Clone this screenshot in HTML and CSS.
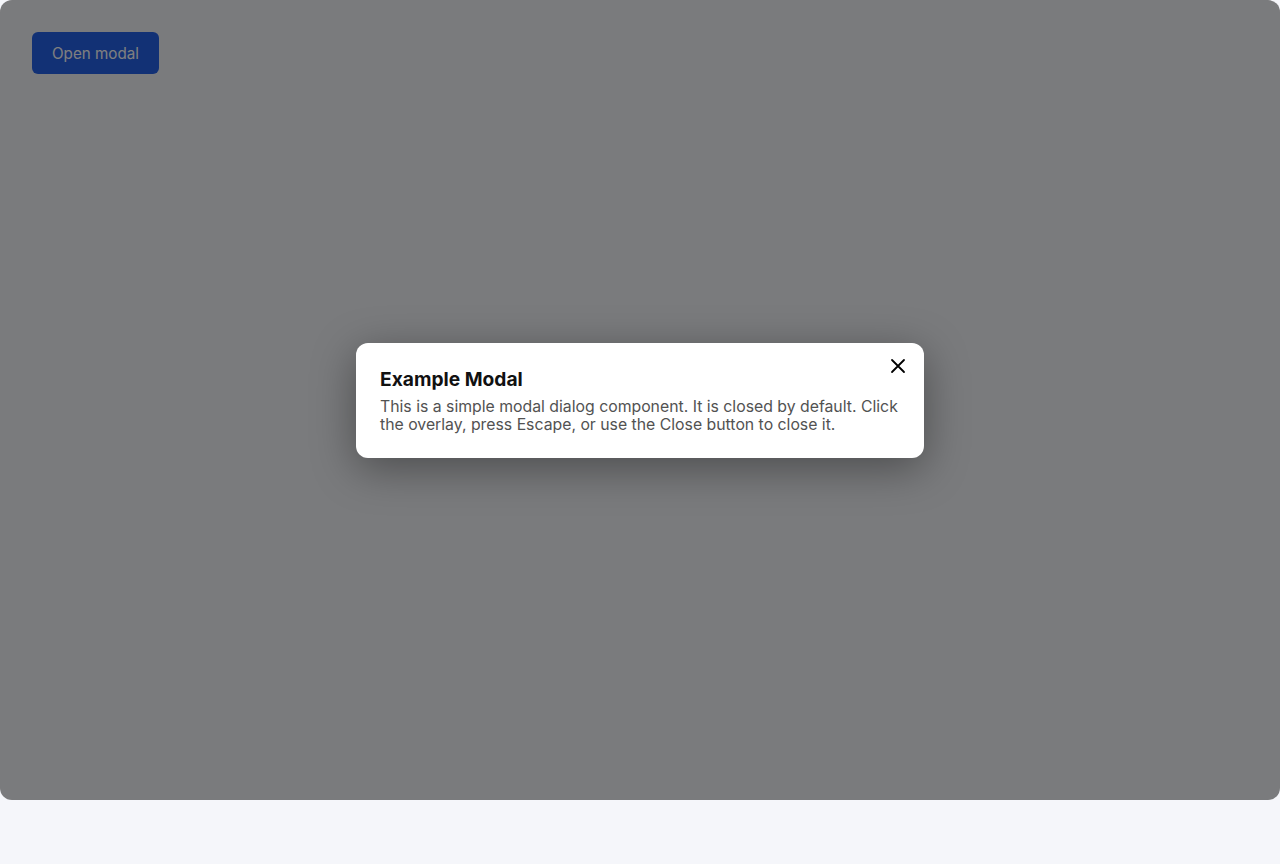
FILE: index.html
```html
<!DOCTYPE html>
<html lang="en">
<head>
<meta charset="utf-8">
<title>Modal</title>
<link rel="stylesheet" href="styles.css">
</head>
<body>
  <div class="app">
    <div class="page">
      <button class="open-btn" type="button">Open modal</button>
    </div>
    <div class="overlay">
      <div class="modal" role="dialog" aria-labelledby="mt">
        <button class="close-btn" type="button" aria-label="Close">
          <svg width="16" height="16" viewBox="0 0 16 16" fill="none" stroke="#000" stroke-width="1.8" stroke-linecap="round"><path d="M2 2 L14 14 M14 2 L2 14"/></svg>
        </button>
        <h2 class="modal-title" id="mt">Example Modal</h2>
        <p class="modal-text">This is a simple modal dialog component. It is closed by default. Click the overlay, press Escape, or use the Close button to close it.</p>
      </div>
    </div>
  </div>
</body>
</html>
```

FILE: styles.css
```css
* { box-sizing: border-box; }
html, body { margin: 0; padding: 0; }
body {
  background: #f5f6fa;
  font-family: Inter, "Noto Sans", "Liberation Sans", sans-serif;
  width: 1280px;
  height: 864px;
  overflow: hidden;
}
.app {
  position: relative;
  width: 1280px;
  height: 800px;
  border-radius: 12px;
  overflow: hidden;
  background: #f5f6fa;
}
.page {
  padding: 32px;
}
.open-btn {
  background: #2563eb;
  color: #fff;
  border: none;
  border-radius: 6px;
  height: 42px;
  padding: 0 20px;
  font-family: inherit;
  font-size: 15.2px;
}
.overlay {
  position: absolute;
  inset: 0;
  background: rgba(0, 0, 0, 0.5);
  display: flex;
  align-items: center;
  justify-content: center;
}
.modal {
  position: relative;
  width: 568px;
  background: #fff;
  border-radius: 12px;
  padding: 24px;
  box-shadow: 0 10px 44px rgba(0, 0, 0, 0.38);
}
.close-btn {
  position: absolute;
  top: 15px;
  right: 18px;
  width: 16px;
  height: 16px;
  padding: 0;
  border: none;
  background: none;
  display: flex;
}
.modal-title {
  margin: 0 0 7px;
  font-size: 19.2px;
  line-height: 24px;
  font-weight: 700;
  color: #111;
}
.modal-text {
  margin: 0;
  font-size: 15.8px;
  line-height: 18px;
  color: #525252;
}
```
